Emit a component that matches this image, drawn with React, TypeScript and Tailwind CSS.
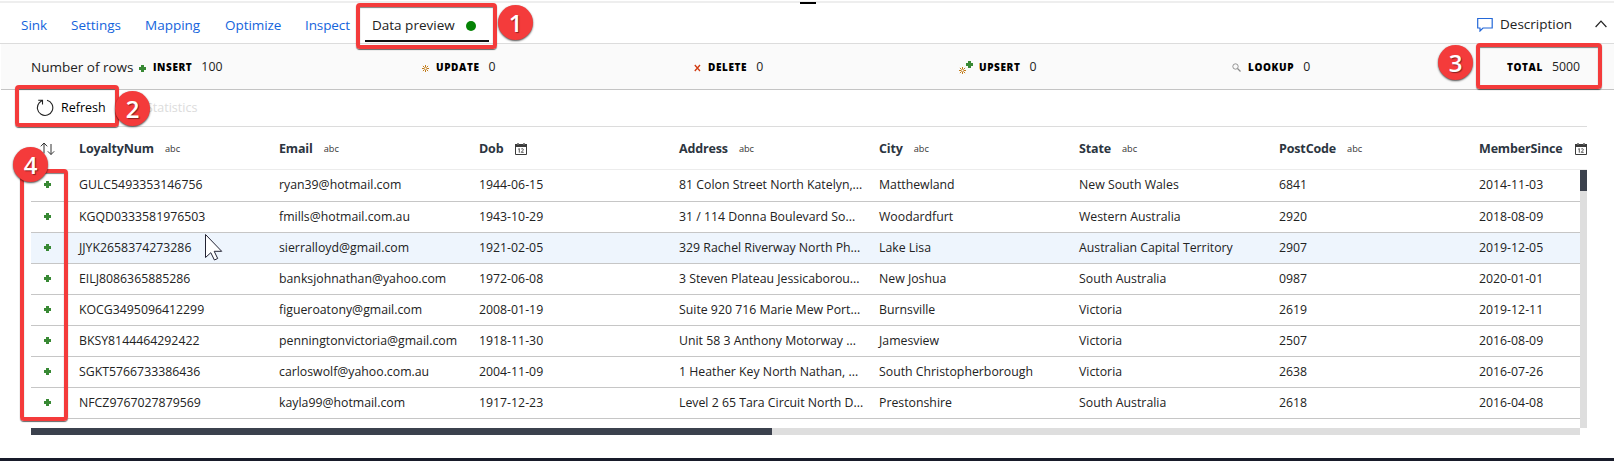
import React from "react";

const Plus = ({ className = "" }: { className?: string }) => (
  <svg width="7" height="7" viewBox="0 0 7 7" className={`shrink-0 ${className}`}>
    <path d="M2 0h3v2h2v3H5v2H2V5H0V2h2z" fill="#388934" />
  </svg>
);

const Star = ({ className = "" }: { className?: string }) => (
  <svg width="7" height="7" viewBox="0 0 7 7" className={`shrink-0 ${className}`}>
    <path d="M3.500 0v2.500M3.500 4.500V7M0 3.500h2.500M4.500 3.500H7M.9.9l1.800 1.800M4.300 4.300l1.800 1.800M6.100.9L4.300 2.700M2.700 4.300L.9 6.100" stroke="#c27c1a" strokeWidth="1" />
  </svg>
);

const Cross = () => (
  <svg width="7" height="8" viewBox="0 0 7 8" className="shrink-0">
    <path d="M.8 1l5.200 6M6 1L.8 7" stroke="#d13a10" strokeWidth="1.300" />
  </svg>
);

const Lens = () => (
  <svg width="9" height="9" viewBox="0 0 9 9" className="shrink-0" fill="none" stroke="#8a8a8a">
    <circle cx="3.500" cy="3.500" r="2.700" strokeWidth=".9" />
    <path d="M5.500 5.500l3 3" strokeWidth="1.200" />
  </svg>
);

const Calendar = () => (
  <svg width="12" height="12" viewBox="0 0 12 12" className="shrink-0">
    <path d="M.5 2h11v9.500H.5z" fill="#fff" stroke="#3b3b3b" />
    <path d="M0 1h12v3H0z" fill="#3b3b3b" />
    <path d="M2 0h2v1.500H2zM8 0h2v1.500H8z" fill="#8a8a8a" />
    <path d="M3.200 6.200l1.100-.6v4.100M6.200 6.200q.3-.5 1.100-.5 1 0 1 .9 0 .7-2.100 2.700h2.500" fill="none" stroke="#444" strokeWidth=".9" />
  </svg>
);

const Frame = ({ className }: { className: string }) => (
  <div className={`pointer-events-none absolute rounded-[4px] border-4 border-[#f43b3b] shadow-[0_1px_1px_rgba(0,0,0,.6),inset_0_1px_1px_rgba(0,0,0,.5)] ${className}`} />
);

const Badge = ({ n, className }: { n: number; className: string }) => (
  <div className={`absolute flex size-[35px] items-center justify-center rounded-full bg-[#f43b3b] text-[24px] font-semibold leading-none text-white shadow-[0_1px_2px_rgba(0,0,0,.7)] ${className}`}>
    <span className="[text-shadow:1px_1px_1px_rgba(0,0,0,.45)]">{n}</span>
  </div>
);

const tabs = [
  { label: "Sink", cls: "w-[50px]" },
  { label: "Settings", cls: "w-[74px]" },
  { label: "Mapping", cls: "w-[80px]" },
  { label: "Optimize", cls: "w-[80px] tracking-[-0.05px]" },
  { label: "Inspect", cls: "w-[60px] tracking-[-0.1px]" },
];

const stats = [
  { label: "INSERT", value: "100", icon: <Plus className="mt-[2px]" />, cls: "w-[283px]" },
  { label: "UPDATE", value: "0", icon: <Star className="mt-[2px]" />, cls: "w-[272px]" },
  { label: "DELETE", value: "0", icon: <Cross />, cls: "w-[265px]" },
  {
    label: "UPSERT",
    value: "0",
    icon: (
      <span className="flex w-[13px] shrink-0">
        <Star className="mt-[6px]" />
        <Plus />
      </span>
    ),
    cls: "w-[273px]",
  },
  { label: "LOOKUP", value: "0", icon: <Lens />, cls: "w-[268px]" },
  { label: "TOTAL", value: "5000", icon: null, cls: "w-[90px]" },
];

const columns = [
  ["LoyaltyNum", "abc"],
  ["Email", "abc"],
  ["Dob", "date"],
  ["Address", "abc"],
  ["City", "abc"],
  ["State", "abc"],
  ["PostCode", "abc"],
  ["MemberSince", "date"],
];

const rows = [
  ["GULC5493353146756", "ryan39@hotmail.com", "1944-06-15", "81 Colon Street North Katelyn,...", "Matthewland", "New South Wales", "6841", "2014-11-03"],
  ["KGQD0333581976503", "fmills@hotmail.com.au", "1943-10-29", "31 / 114 Donna Boulevard So...", "Woodardfurt", "Western Australia", "2920", "2018-08-09"],
  ["JJYK2658374273286", "sierralloyd@gmail.com", "1921-02-05", "329 Rachel Riverway North Ph...", "Lake Lisa", "Australian Capital Territory", "2907", "2019-12-05"],
  ["EILJ8086365885286", "banksjohnathan@yahoo.com", "1972-06-08", "3 Steven Plateau Jessicaborou...", "New Joshua", "South Australia", "0987", "2020-01-01"],
  ["KOCG3495096412299", "figueroatony@gmail.com", "2008-01-19", "Suite 920 716 Marie Mew Port...", "Burnsville", "Victoria", "2619", "2019-12-11"],
  ["BKSY8144464292422", "penningtonvictoria@gmail.com", "1918-11-30", "Unit 58 3 Anthony Motorway ...", "Jamesview", "Victoria", "2507", "2016-08-09"],
  ["SGKT5766733386436", "carloswolf@yahoo.com.au", "2004-11-09", "1 Heather Key North Nathan, ...", "South Christopherborough", "Victoria", "2638", "2016-07-26"],
  ["NFCZ9767027879569", "kayla99@hotmail.com", "1917-12-23", "Level 2 65 Tara Circuit North D...", "Prestonshire", "South Australia", "2618", "2016-04-08"],
];

const grid = "grid grid-cols-[48px_repeat(7,200px)_108px]";

export default function App() {
  return (
    <div className="relative flex h-[461px] w-[1614px] flex-col overflow-hidden bg-white font-['Open_Sans','Noto_Sans',sans-serif] text-[#222]">
      <div className="mt-px h-[2px] shrink-0 bg-[#eeeeee]" />
      <div className="absolute left-[800px] top-[2px] h-[2px] w-[16px] bg-black" />

      <nav className="flex h-[41px] shrink-0 items-stretch border-b border-[#dcdcdc] pl-[21px] text-[13.500px] text-[#1464dc]">
        {tabs.map((t) => (
          <a key={t.label} className={`flex shrink-0 items-center whitespace-nowrap pt-[5px] ${t.cls}`}>{t.label}</a>
        ))}
        <a className="mb-px flex w-[124px] items-center justify-between whitespace-nowrap border-b-2 border-[#111] pl-[7px] pr-[13px] pt-[8px] text-[#222]">
          Data preview
          <span className="size-[10px] rounded-full bg-[#058305]" />
        </a>
        <div className="ml-auto flex items-center pr-[7px] pt-[2px] text-[#222]">
          <svg width="16" height="16" viewBox="0 0 16 16" fill="none" stroke="#2468d8" strokeWidth="1.200">
            <path d="M.7 2.500h14.500v9.500H6l-3 3v-3H.7z" />
          </svg>
          <span className="ml-[7px] w-[95px] pt-px">Description</span>
          <svg width="12" height="8" viewBox="0 0 12 8" fill="none" stroke="#222" strokeWidth="1.200">
            <path d="M.6 7L6 1.200 11.400 7" />
          </svg>
        </div>
      </nav>

      <section className="ml-px flex h-[46px] shrink-0 items-center border-b border-[#c4c4c4] bg-[#fafafa] pl-[30px] pt-[2px] text-[13.500px]">
        <span className="w-[108px] whitespace-nowrap">Number of rows</span>
        {stats.map((s) => (
          <div key={s.label} className={`flex shrink-0 items-center ${s.cls}`}>
            {s.icon}
            <b className="ml-[7px] text-[10px] font-extrabold tracking-[0.6px] text-black">{s.label}</b>
            <span className="ml-[9px] text-[12.300px]">{s.value}</span>
          </div>
        ))}
      </section>

      <div className="ml-[31px] mr-[27px] flex h-[37px] shrink-0 items-center border-b border-[#dcdcdc] pl-[5px] text-[12.500px]">
        <svg width="18" height="18" viewBox="0 0 18 18" fill="none" stroke="#222" strokeWidth="1.100">
          <path d="M11 1.300A7.700 7.700 0 1 1 3.200 3.800L6.300 1.300M2.200 1.300h4.300v4.300" />
        </svg>
        <span className="ml-[7px] w-[85px] text-black">Refresh</span>
        <span className="pt-px text-[#dcdcdc]">Statistics</span>
      </div>

      <div className={`ml-[31px] mr-[27px] h-[43px] shrink-0 items-center border-b border-[#ececec] pt-[2px] text-[12.500px] font-bold tracking-[-0.15px] text-[#2c3540] ${grid}`}>
        <svg width="15" height="14" viewBox="0 0 15 14" fill="none" stroke="#333" className="ml-[9px]">
          <path d="M4 11.500V1M.8 4.300L4 1l3.200 3.300M11 2v10.500M7.800 9.300l3.200 3.200 3.200-3.200" />
        </svg>
        {columns.map(([name, type]) => (
          <div key={name} className="flex items-center whitespace-nowrap">
            {name}
            {type === "abc" ? (
              <span className="ml-[11px] text-[9.200px] font-normal tracking-normal text-[#333]">abc</span>
            ) : (
              <span className="ml-[12px]"><Calendar /></span>
            )}
          </div>
        ))}
      </div>

      <div className="ml-[31px] flex h-[258px] w-[1556px] shrink-0">
        <div className="w-[1549px] overflow-hidden text-[12.300px]">
          {rows.map((r, i) => (
            <div key={r[0]} className={`h-[31px] items-center border-b border-[#c6c6c6] first:h-[32px] ${grid} ${i === 2 ? "bg-[#eef5fd]" : ""}`}>
              <Plus className="mb-[2px] ml-[13px]" />
              {r.map((c, j) => (
                <span key={j} className="whitespace-nowrap">{c}</span>
              ))}
            </div>
          ))}
        </div>
        <div className="w-[7px] bg-[#dedede]">
          <div className="h-[21px] bg-[#3b414d]" />
        </div>
      </div>
      <div className="ml-[31px] h-[7px] w-[1549px] shrink-0 bg-[#dedede]">
        <div className="h-full w-[741px] bg-[#3b414d]" />
      </div>
      <div className="mt-auto h-[3px] shrink-0 bg-[#181b2a]" />

      <Frame className="left-[356px] top-[3px] h-[46px] w-[141px]" />
      <Frame className="left-[15px] top-[85px] h-[42px] w-[104px]" />
      <Frame className="left-[1476px] top-[43px] h-[46px] w-[126px]" />
      <Frame className="left-[20px] top-[169px] h-[252px] w-[48px]" />
      <Badge n={1} className="left-[498px] top-[5px]" />
      <Badge n={2} className="left-[115px] top-[91px]" />
      <Badge n={3} className="left-[1438px] top-[45px]" />
      <Badge n={4} className="left-[13px] top-[147px]" />

      <svg width="20" height="29" viewBox="0 0 20 29" className="absolute left-[204px] top-[233px]">
        <path d="M1.500 1.500v23l5.300-4.800 3.600 7.300 3.300-1.500-3.500-7.200h7.500z" fill="#fff" stroke="#223" strokeWidth="1" />
      </svg>
    </div>
  );
}
